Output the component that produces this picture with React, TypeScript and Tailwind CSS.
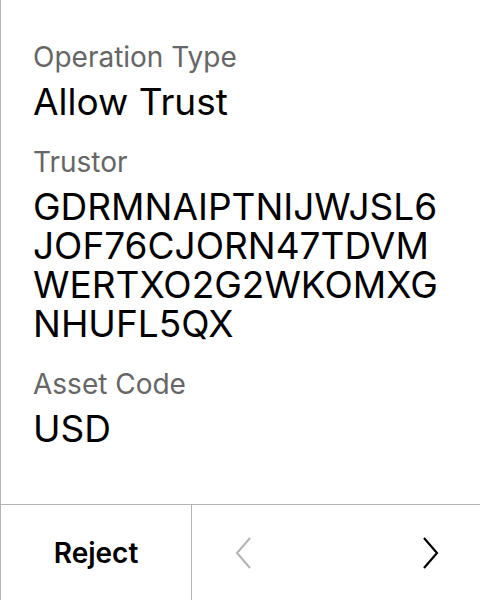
const Field = ({ label, value }: { label: string; value: React.ReactNode }) => (
  <div className="flex flex-col gap-[8px]">
    <p className="text-[28px] leading-[34px] text-[#666666]">{label}</p>
    <div className="text-[37px] leading-[39px] text-black">{value}</div>
  </div>
);

export default function App() {
  return (
    <div
      className="w-[480px] h-[600px] flex flex-col bg-white border-l border-[#b3b3b3]"
      style={{ fontFamily: "Inter, 'Noto Sans', sans-serif" }}
    >
      <div className="flex-1 flex flex-col gap-[24px] pt-[40px] pl-[32px] pr-[10px]">
        <Field label="Operation Type" value="Allow Trust" />
        <Field
          label="Trustor"
          value={
            <>
              <div>GDRMNAIPTNIJWJSL6</div>
              <div>JOF76CJORN47TDVM</div>
              <div>WERTXO2G2WKOMXG</div>
              <div>NHUFL5QX</div>
            </>
          }
        />
        <Field label="Asset Code" value="USD" />
      </div>
      <div className="h-[96px] flex border-t border-[#b3b3b3]">
        <button className="w-[191px] flex items-center justify-center border-r border-[#b3b3b3] text-[28px] font-semibold text-black">
          Reject
        </button>
        <div className="flex-1 flex items-center justify-between pl-[42px] pr-[40px]">
          <svg width="20" height="34" viewBox="0 0 20 34" fill="none">
            <path d="M16 2 L3 17 L16 32" stroke="#b3b3b3" strokeWidth="2" />
          </svg>
          <svg width="20" height="34" viewBox="0 0 20 34" fill="none">
            <path d="M4 2 L17 17 L4 32" stroke="#000" strokeWidth="2.2" />
          </svg>
        </div>
      </div>
    </div>
  );
}
